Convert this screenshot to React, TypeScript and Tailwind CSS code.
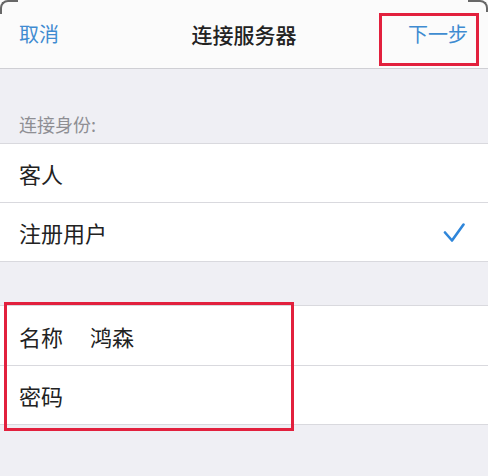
import React from "react";

function Row({ label, value, check, h }: { label: string; value?: string; check?: boolean; h: string }) {
  return (
    <div className={`${h} border-t border-[#d9d9de] flex items-center pl-[19px] pr-[23px] bg-white`}>
      <span className="text-[22px] text-[#222222] leading-none">{label}</span>
      {value && <span className="ml-[27px] text-[22px] text-[#222222] leading-none">{value}</span>}
      <div className="flex-1" />
      {check && (
        <svg width="22" height="21" viewBox="0 0 22 21" fill="none">
          <path d="M2 10.5 L9 18.5 L20.5 2.5" stroke="#2f86da" strokeWidth="2.6" strokeLinecap="round" strokeLinejoin="round" />
        </svg>
      )}
    </div>
  );
}

export default function App() {
  return (
    <div className="relative w-[488px] h-[476px] bg-[#efeff4] overflow-hidden font-['Noto_Sans_CJK_SC','Noto_Sans',sans-serif]">
      {/* nav bar */}
      <div className="h-[69px] bg-[#fbfbfb] border-b border-[#cfcfd4] grid grid-cols-[1fr_auto_1fr] items-center px-[19px]">
        <span className="text-[20px] text-[#3f8bd1] leading-none">取消</span>
        <span className="text-[21px] font-medium text-[#222222] leading-none">连接服务器</span>
        <span className="justify-self-end text-[20px] text-[#3f8bd1] leading-none pr-[1px]">下一步</span>
      </div>

      {/* section header */}
      <div className="h-[74px] flex items-end pb-[10px] px-[19px]">
        <span className="text-[18px] text-[#8e8e93] leading-none">连接身份:</span>
      </div>

      <div className="border-b border-[#d9d9de]">
        <Row h="h-[59px]" label="客人" />
        <Row h="h-[59px]" label="注册用户" check />
      </div>

      <div className="h-[43px]" />

      <div className="border-b border-[#d9d9de]">
        <Row h="h-[60px]" label="名称" value="鸿森" />
        <Row h="h-[59px]" label="密码" />
      </div>

      {/* annotation rectangles */}
      <div className="absolute left-[379px] top-[13px] w-[100px] h-[53px] border-[3px] border-[#e2203d]" />
      <div className="absolute left-[4px] top-[302px] w-[290px] h-[129px] border-[3px] border-[#e2203d]" />

      {/* screen corners */}
      <div className="absolute left-0 top-0 w-[18px] h-[14px] border-t-2 border-l-2 border-[#2a2a2a] rounded-tl-[8px] opacity-70" />
      <div className="absolute right-0 top-0 w-[20px] h-[12px] border-t-2 border-r-2 border-[#2a2a2a] rounded-tr-[8px] opacity-70" />
    </div>
  );
}
